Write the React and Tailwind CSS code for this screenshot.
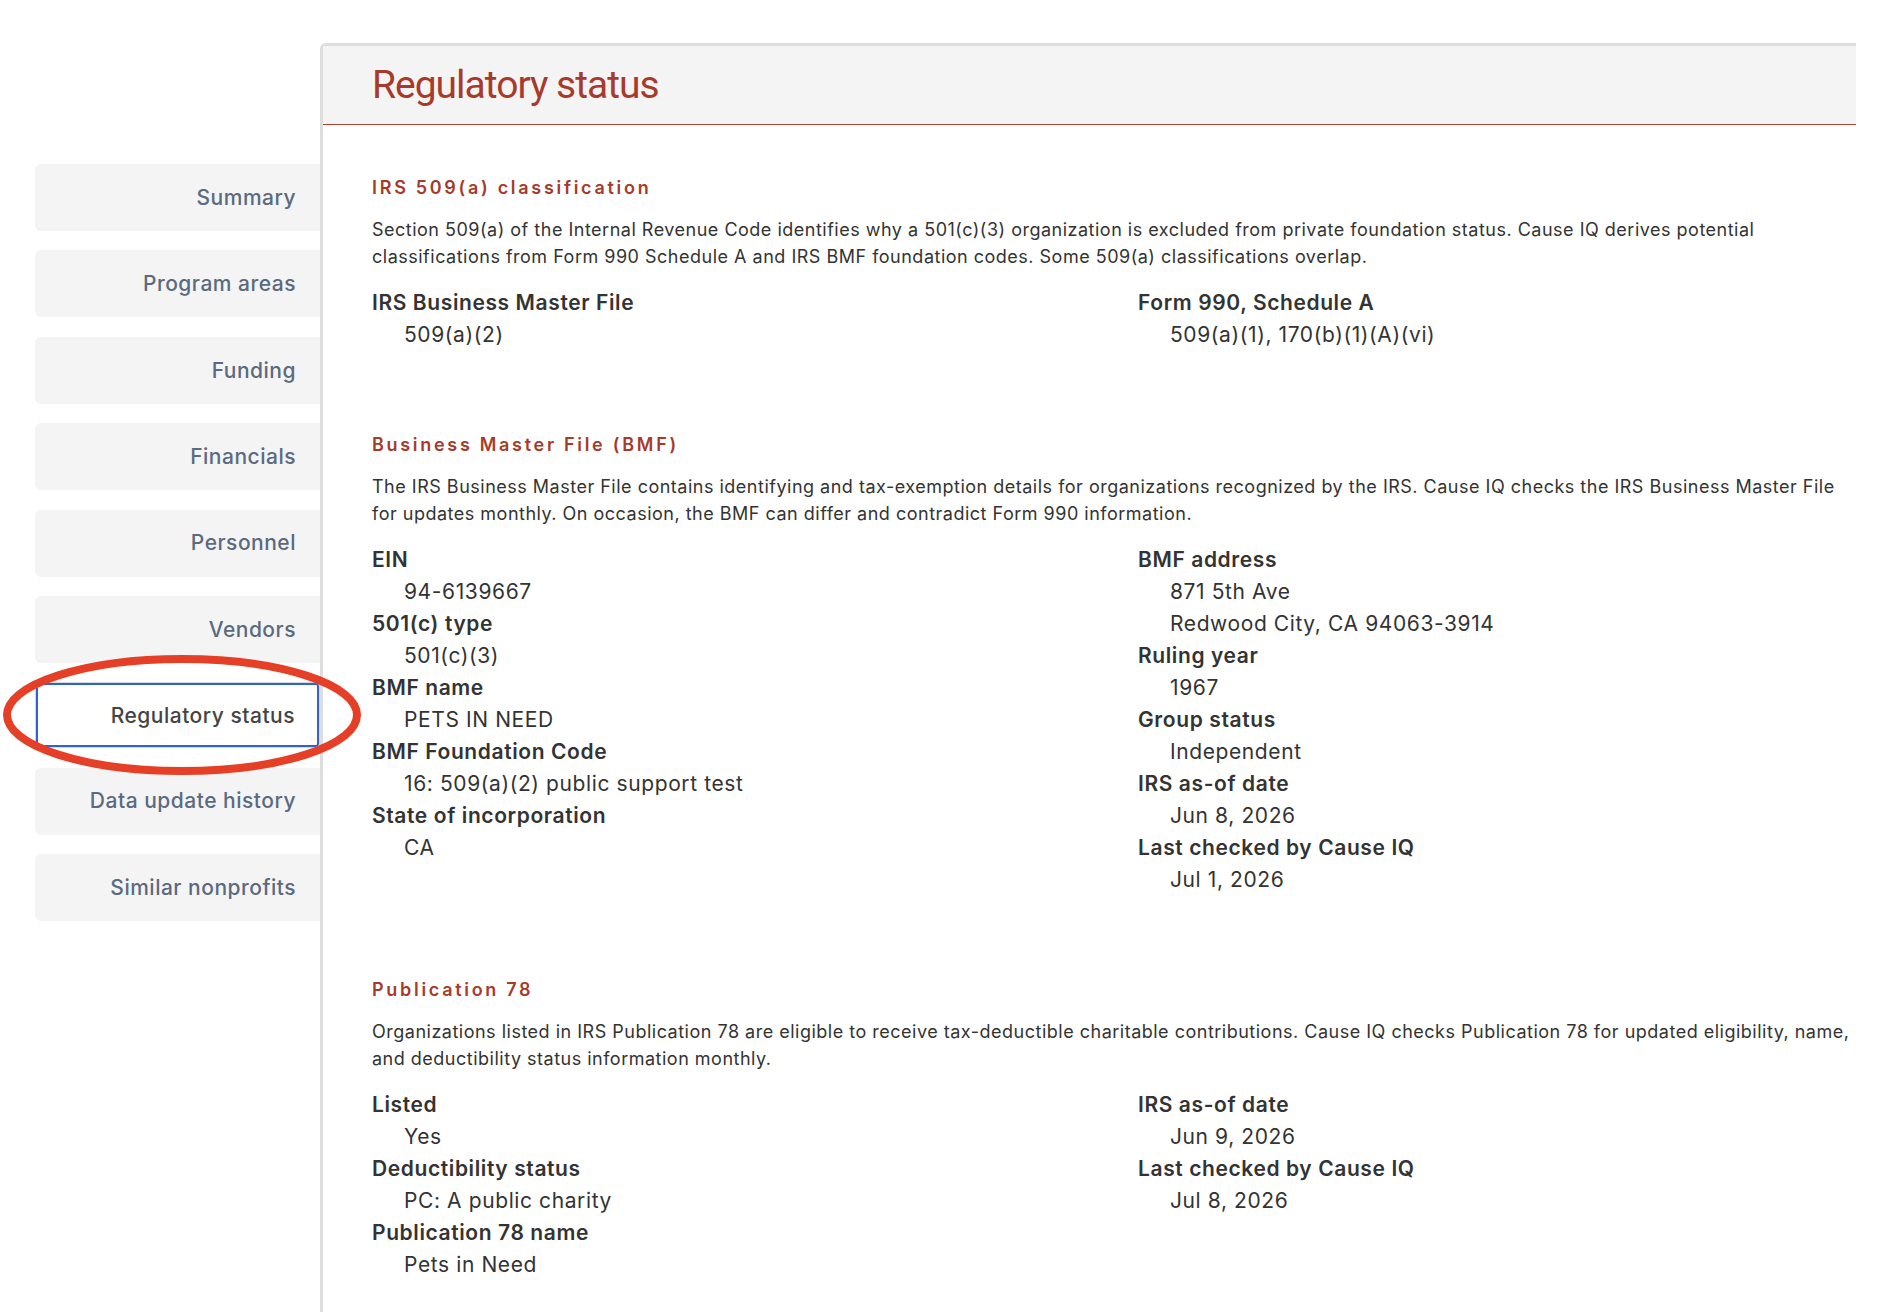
import React from 'react';

const navItems = [
  'Summary',
  'Program areas',
  'Funding',
  'Financials',
  'Personnel',
  'Vendors',
  'Regulatory status',
  'Data update history',
  'Similar nonprofits',
];

const sections = [
  {
    title: 'IRS 509(a) classification',
    blurb:
      'Section 509(a) of the Internal Revenue Code identifies why a 501(c)(3) organization is excluded from private foundation status. Cause IQ derives potential classifications from Form 990 Schedule A and IRS BMF foundation codes. Some 509(a) classifications overlap.',
    left: [{ label: 'IRS Business Master File', values: ['509(a)(2)'] }],
    right: [{ label: 'Form 990, Schedule A', values: ['509(a)(1), 170(b)(1)(A)(vi)'] }],
  },
  {
    title: 'Business Master File (BMF)',
    blurb:
      'The IRS Business Master File contains identifying and tax-exemption details for organizations recognized by the IRS. Cause IQ checks the IRS Business Master File for updates monthly. On occasion, the BMF can differ and contradict Form 990 information.',
    left: [
      { label: 'EIN', values: ['94-6139667'] },
      { label: '501(c) type', values: ['501(c)(3)'] },
      { label: 'BMF name', values: ['PETS IN NEED'] },
      { label: 'BMF Foundation Code', values: ['16: 509(a)(2) public support test'] },
      { label: 'State of incorporation', values: ['CA'] },
    ],
    right: [
      { label: 'BMF address', values: ['871 5th Ave', 'Redwood City, CA 94063-3914'] },
      { label: 'Ruling year', values: ['1967'] },
      { label: 'Group status', values: ['Independent'] },
      { label: 'IRS as-of date', values: ['Jun 8, 2026'] },
      { label: 'Last checked by Cause IQ', values: ['Jul 1, 2026'] },
    ],
  },
  {
    title: 'Publication 78',
    blurb:
      'Organizations listed in IRS Publication 78 are eligible to receive tax-deductible charitable contributions. Cause IQ checks Publication 78 for updated eligibility, name, and deductibility status information monthly.',
    left: [
      { label: 'Listed', values: ['Yes'] },
      { label: 'Deductibility status', values: ['PC: A public charity'] },
      { label: 'Publication 78 name', values: ['Pets in Need'] },
    ],
    right: [
      { label: 'IRS as-of date', values: ['Jun 9, 2026'] },
      { label: 'Last checked by Cause IQ', values: ['Jul 8, 2026'] },
    ],
  },
];

const FieldList = ({ fields }) => (
  <dl className="text-[21px] leading-[32px] tracking-[0.6px] text-[#333]">
    {fields.map((f) => (
      <div key={f.label}>
        <dt className="font-semibold">{f.label}</dt>
        {f.values.map((v) => (
          <dd key={v} className="pl-[32px]">
            {v}
          </dd>
        ))}
      </div>
    ))}
  </dl>
);

const Section = ({ section }) => (
  <section className="mb-[80px]">
    <h3 className="text-[18px] leading-[27px] font-semibold tracking-[2.7px] text-[#a63b2c] mb-[15px]">
      {section.title}
    </h3>
    <p className="text-[18px] leading-[27px] tracking-[0.5px] text-[#333] mb-[17px]">{section.blurb}</p>
    <div className="grid grid-cols-[766px_1fr]">
      <FieldList fields={section.left} />
      <FieldList fields={section.right} />
    </div>
  </section>
);

export default function App() {
  return (
    <div className="relative min-h-[1312px] bg-white flex font-['Inter',sans-serif]">
      {/* side navigation */}
      <nav className="w-[320px] shrink-0 pt-[164px] pl-[35px] flex flex-col gap-[19.4px]">
        {navItems.map((item) =>
          item === 'Regulatory status' ? (
            <div
              key={item}
              className="h-[66px] flex items-center justify-end pr-[24px] bg-white border border-[#d9d9d9] rounded-[4px] shadow-[inset_0_0_0_2px_#2f63d2] text-[21px] tracking-[0.5px] font-medium text-[#444]"
            >
              {item}
            </div>
          ) : (
            <div
              key={item}
              className="h-[67px] flex items-center justify-end pr-[24px] bg-[#f4f4f4] rounded-l-[6px] text-[21px] tracking-[0.5px] font-medium text-[#5a6a80]"
            >
              {item}
            </div>
          )
        )}
      </nav>

      {/* main panel */}
      <main className="flex-1 mt-[43px] mr-[48px] border-t-[3px] border-l-[3px] border-[#dddddd] rounded-tl-[6px]">
        <header className="h-[79px] flex items-center pl-[49px] bg-[#f4f4f4] border-b-[1.5px] border-[#b04230]">
          <h2 className="font-['Roboto',sans-serif] text-[39px] text-[#a63b2c] tracking-[-1px]">
            Regulatory status
          </h2>
        </header>
        <div className="pl-[49px] pr-[4px] pt-[48.5px]">
          {sections.map((s) => (
            <Section key={s.title} section={s} />
          ))}
        </div>
      </main>

      {/* red highlight ring around the active tab */}
      <svg className="absolute left-0 top-[650px]" width="370" height="130" viewBox="0 0 370 130">
        <ellipse cx="182" cy="65" rx="175" ry="56" fill="none" stroke="#e63f28" strokeWidth="8" />
      </svg>
    </div>
  );
}
